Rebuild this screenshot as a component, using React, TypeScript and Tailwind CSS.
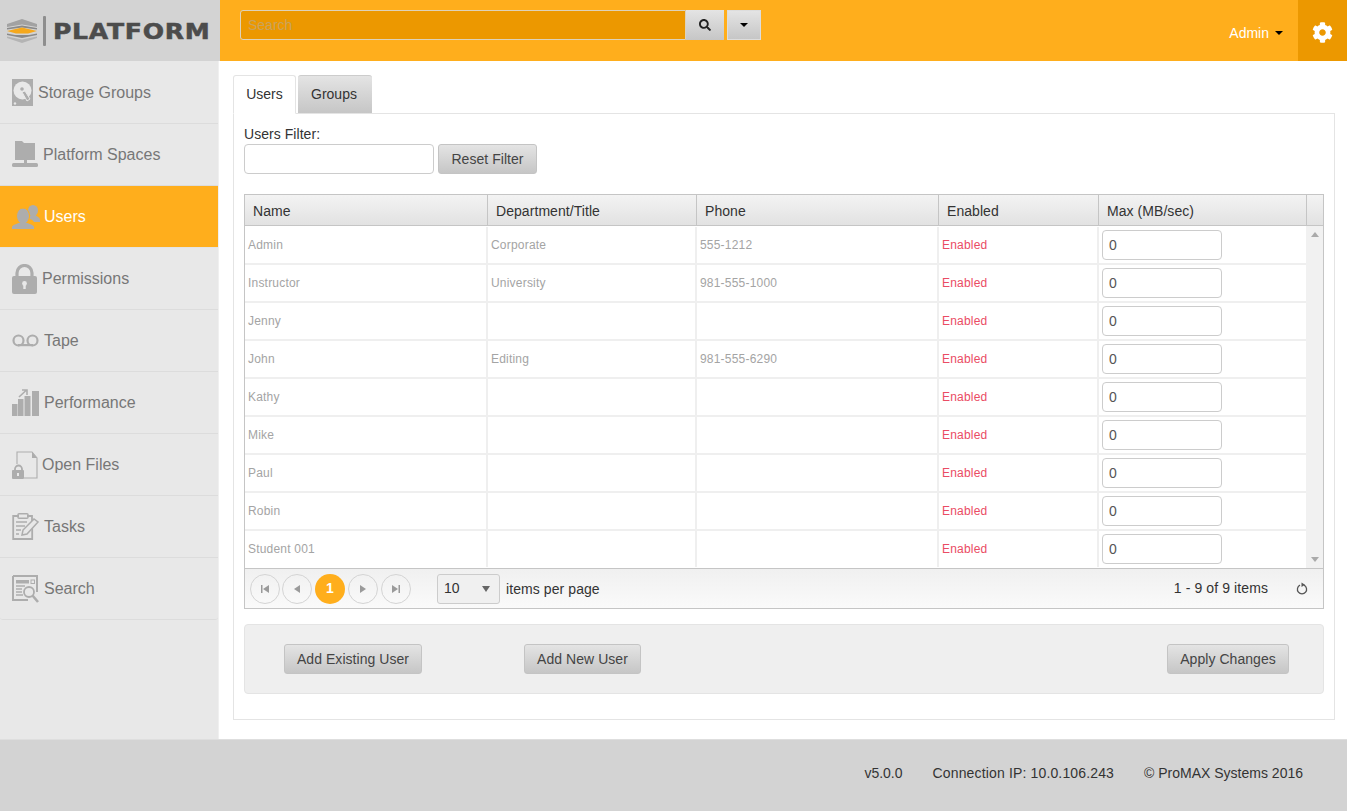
import React from "react";
import { FaCog, FaSearch } from "react-icons/fa";

const F = "#adadad";

const Disk = () => (
  <svg width="21" height="27" viewBox="0 0 21 27">
    <rect width="21" height="27" fill={F} />
    <circle cx="10.5" cy="11.5" r="9" fill="#e8e8e8" />
    <circle cx="10" cy="10" r="1.8" fill={F} />
    <path d="M10 13 L13 12 L18 20 L15 22 Z" fill={F} stroke="#e8e8e8" strokeWidth="1" />
    <circle cx="3" cy="24.500" r="1.200" fill="#e8e8e8" />
  </svg>
);
const Spaces = () => (
  <svg width="26" height="27" viewBox="0 0 26 27">
    <path d="M3 0h7l2 2h11v17H3z" fill={F} />
    <rect x="12" y="19" width="3" height="4" fill={F} />
    <rect x="0" y="22" width="26" height="4" rx="1.500" fill={F} />
  </svg>
);
const UsersIcon = () => (
  <svg width="28" height="24" viewBox="0 0 28 24">
    <ellipse cx="21" cy="5.500" rx="5" ry="5.500" fill={F} />
    <path d="M19 9h4c0 2 5 3 5 5.500V17h-6c-1-2-3-3-5-3z" fill={F} />
    <ellipse cx="11" cy="11" rx="6.500" ry="8" fill={F} stroke="#ffae1c" strokeWidth="1" />
    <path d="M0 24v-2c0-2 5-3 8-4.500h6c3 1.500 8 2.500 8 4.500v2z" fill={F} />
  </svg>
);
const Lock = () => (
  <svg width="25" height="30" viewBox="0 0 25 30">
    <path d="M5 13V9a7.500 7.500 0 0 1 15 0v4" fill="none" stroke={F} strokeWidth="3.200" />
    <rect y="12" width="25" height="18" rx="2" fill={F} />
    <circle cx="12.500" cy="19.500" r="2.400" fill="#e8e8e8" />
    <rect x="11.300" y="20" width="2.400" height="5" fill="#e8e8e8" />
  </svg>
);
const TapeIcon = () => (
  <svg width="27" height="13" viewBox="0 0 27 13">
    <circle cx="6.500" cy="6.500" r="5" fill="none" stroke={F} strokeWidth="2.200" />
    <circle cx="20.500" cy="6.500" r="5" fill="none" stroke={F} strokeWidth="2.200" />
    <rect x="6" y="10" width="15" height="2.200" fill={F} />
  </svg>
);
const Perf = () => (
  <svg width="27" height="27" viewBox="0 0 27 27">
    <rect y="15" width="5.500" height="12" fill={F} />
    <rect x="6" y="10" width="5.500" height="17" fill={F} />
    <rect x="12.500" y="7" width="6" height="20" fill={F} />
    <rect x="20" y="2" width="7" height="25" fill={F} />
    <path d="M7 8 L14 1.500 M10 1h5v5" fill="none" stroke={F} strokeWidth="1.600" />
  </svg>
);
const OpenFile = () => (
  <svg width="26" height="28" viewBox="0 0 26 28">
    <path d="M5 13V1h15l5 6v20H12" fill="none" stroke={F} strokeWidth="1.100" />
    <path d="M20 1v6h5z" fill={F} />
    <path d="M3 20v-2a3.500 3.500 0 0 1 7 0v2" fill="none" stroke={F} strokeWidth="1.800" />
    <rect y="19" width="12" height="9" rx="1" fill={F} />
    <rect x="5" y="22" width="2" height="3" fill="#e8e8e8" />
  </svg>
);
const TasksIcon = () => (
  <svg width="27" height="27" viewBox="0 0 27 27">
    <path d="M7 3H1.200v23h19V15" fill="none" stroke={F} strokeWidth="1.800" />
    <path d="M20 8V3h-5" fill="none" stroke={F} strokeWidth="1.800" />
    <rect x="6" y="0.800" width="10" height="4.500" rx="1" fill="none" stroke={F} strokeWidth="1.500" />
    <path d="M4 9h11M4 13h9M4 17h5M4 21h3" stroke={F} strokeWidth="1.500" />
    <path d="M10 22 L11 17 L22 6 L26 9 L15 21 Z" fill="#e8e8e8" stroke={F} strokeWidth="1.500" />
  </svg>
);
const SearchIcon = () => (
  <svg width="27" height="28" viewBox="0 0 27 28">
    <path d="M1 1h24v16M16 25H1V1" fill="none" stroke={F} strokeWidth="2" />
    <rect x="4" y="5" width="13" height="3.500" fill={F} />
    <rect x="19" y="5" width="3.500" height="3.500" fill="none" stroke={F} />
    <path d="M4 11h9M4 14h6M4 17h6M4 20h7" stroke={F} strokeWidth="1.300" />
    <circle cx="17" cy="17" r="5" fill="#e8e8e8" stroke={F} strokeWidth="1.800" />
    <path d="M20.500 20.500L26 27" stroke={F} strokeWidth="2.600" />
  </svg>
);

const nav: [string, React.ReactNode, string][] = [
  ["Storage Groups", <Disk />, "gap-[5px]"],
  ["Platform Spaces", <Spaces />, "gap-[5px]"],
  ["Users", <UsersIcon />, "gap-[4px]"],
  ["Permissions", <Lock />, "gap-[5px]"],
  ["Tape", <TapeIcon />, "gap-[5px]"],
  ["Performance", <Perf />, "gap-[5px]"],
  ["Open Files", <OpenFile />, "gap-[4px]"],
  ["Tasks", <TasksIcon />, "gap-[5px]"],
  ["Search", <SearchIcon />, "gap-[5px]"],
];

const rows = [
  ["Admin", "Corporate", "555-1212"],
  ["Instructor", "University", "981-555-1000"],
  ["Jenny", "", ""],
  ["John", "Editing", "981-555-6290"],
  ["Kathy", "", ""],
  ["Mike", "", ""],
  ["Paul", "", ""],
  ["Robin", "", ""],
  ["Student 001", "", ""],
];

const Caret = () => (
  <span className="inline-block w-0 h-0 border-x-[4px] border-x-transparent border-t-[4px] border-t-black" />
);

const Btn = ({ children, w }: { children: React.ReactNode; w: string }) => (
  <button className={`${w} h-[30px] rounded-[3px] border border-[#c4c4c4] bg-linear-to-b from-[#e4e4e4] to-[#c6c6c6] text-[14px] tracking-[0.05px] text-[#444] flex items-center justify-center`}>
    {children}
  </button>
);

const Pager = ({ children, tight }: { children: React.ReactNode; tight?: boolean }) => (
  <span className={`w-[30px] h-[30px] rounded-full border border-[#d4d4d4] flex items-center justify-center ${tight ? "-mr-px" : ""}`}>{children}</span>
);

const tri = "#9a9a9a";

export default function App() {
  return (
    <div className="w-full h-[811px] flex flex-col bg-white overflow-hidden font-['Liberation_Sans',Arial,sans-serif] text-[14px] text-[#333]">
      <header className="h-[61px] flex shrink-0 bg-[#ffae1c]">
        <div className="w-[220px] bg-[#d3d3d3] flex items-center pl-[7px]">
          <svg width="30" height="24" viewBox="0 0 30 24">
            <path d="M15 0L30 5v3L15 5.500 0 8V5z" fill="#a2a2a2" />
            <path d="M0 9L15 6.500 30 9v1.500L15 8.500 0 10.500z" fill="#8a8a8a" />
            <path d="M0 12L15 8.500 30 12 21 14.500H9z" fill="#f5a81c" />
            <path d="M0 14.500l8 1.500h14l8-1.500v1.500l-15 3-15-3z" fill="#8a8a8a" />
            <path d="M0 17.500l15 3 15-3V19l-15 5-15-5z" fill="#b4b4b4" />
          </svg>
          <span className="ml-[6px] w-[3px] h-[30px] bg-[#8e8e8e] rounded-[1px]" />
          <span className="ml-[7px] pt-[3px] font-['DejaVu_Sans',sans-serif] font-bold text-[21px] leading-none text-[#4c4c4c] [-webkit-text-stroke:0.5px_#4c4c4c] tracking-[0.6px] origin-left scale-x-[1.195] whitespace-nowrap">PLATFORM</span>
        </div>
        <div className="flex-1 flex items-start pt-[10px] pl-[20px]">
          <div className="w-[446px] h-[30px] bg-[#ec9800] border border-[#ddd2ba] rounded-l-[3px] text-[14px] text-[#c9a35d] pl-[7px] flex items-center">Search</div>
          <span className="w-[38px] h-[30px] bg-linear-to-b from-[#e4e4e4] to-[#c6c6c6] flex items-center justify-center text-[#222]"><FaSearch size={12} /></span>
          <span className="ml-[3px] w-[34px] h-[30px] border border-[#ddd] bg-linear-to-b from-[#e4e4e4] to-[#c6c6c6] flex items-center justify-center"><Caret /></span>
        </div>
        <div className="flex items-center text-white gap-[6px] pr-[15px] pt-[5px]">
          Admin <Caret />
        </div>
        <div className="w-[49px] bg-[#ec9800] flex items-center justify-center text-white pt-[3px]"><FaCog size={21} /></div>
      </header>

      <div className="flex h-[678px] shrink-0">
        <aside className="w-[219px] shrink-0 bg-[#e8e8e8] border-r border-[#f0f0f0] pt-px">
          <nav className="border-b border-[#dcdcdc] rounded-b-[3px]">
            {nav.map(([t, ic, g], i) => {
              const active = t === "Users";
              return (
                <div
                  key={t}
                  className={`pl-[12px] flex items-center text-[16px] ${g} ${i < 8 ? "h-[62px] border-b" : "h-[61px]"} ${active ? "bg-[#ffae1c] text-white border-[#e4e4e4]" : "text-[#777] border-[#dcdcdc]"}`}
                >
                  <span className="shrink-0 flex items-center">{ic}</span>
                  <span>{t}</span>
                </div>
              );
            })}
          </nav>
        </aside>

        <main className="flex-1 pt-[14px] pl-[14px] pr-[12px]">
          <div className="flex h-[39px] gap-[2px] items-start relative z-10">
            <div className="w-[63px] h-[39px] bg-white border border-[#e4e4e4] border-b-white rounded-t-[3px] flex items-center justify-center">Users</div>
            <div className="w-[74px] h-[38px] bg-linear-to-b from-[#e4e4e4] to-[#c6c6c6] border-t border-[#ccc] rounded-t-[3px] flex items-center justify-center pr-[2px]">Groups</div>
          </div>
          <section className="h-[607px] -mt-px border border-[#e4e4e4] px-[10px] pt-[12px]">
            <div className="leading-[16px] mb-[2px] tracking-[0.05px]">Users Filter:</div>
            <div className="flex gap-[4px]">
              <div className="w-[190px] h-[30px] bg-white border border-[#ccc] rounded-[4px]" />
              <Btn w="w-[99px]">Reset Filter</Btn>
            </div>

            <div className="mt-[20px] border border-[#c5c5c5]">
              <div className="grid grid-cols-[243px_209px_242px_160px_208px_1fr] h-[31px] border-b border-[#c5c5c5] bg-linear-to-b from-[#f3f3f3] to-[#e2e2e2]">
                {["Name", "Department/Title", "Phone", "Enabled", "Max (MB/sec)", ""].map((h, i) => (
                  <div key={i} className={`flex items-center pl-[8px] pt-[2px] tracking-[0.06px] ${i < 5 ? "border-r border-[#c5c5c5]" : ""} ${i === 0 ? "-ml-px pl-[9px]" : ""}`}>{h}</div>
                ))}
              </div>
              <div className="flex h-[342px]">
                <div className="w-[1061px] pt-px">
                  {rows.map((r) => (
                    <div key={r[0]} className="grid grid-cols-[243px_209px_242px_160px_208px] h-[38px] border-b-2 border-[#efefef] last:border-b-0 last:h-[36px] text-[12px] tracking-[0.2px] text-[#a4a4a4]">
                      <div className="pl-[4px] -ml-px flex items-center border-r-2 border-[#efefef]">{r[0]}</div>
                      <div className="pl-[3px] flex items-center border-r-2 border-[#efefef]">{r[1]}</div>
                      <div className="pl-[3px] flex items-center border-r-2 border-[#efefef]">{r[2]}</div>
                      <div className="pl-[3px] flex items-center text-[#ea4c64] border-r-2 border-[#efefef]">Enabled</div>
                      <div className="pl-[3px] flex items-center">
                        <div className="w-[120px] h-[30px] border border-[#ccc] rounded-[4px] pl-[6px] flex items-center text-[14px] text-[#555]">0</div>
                      </div>
                    </div>
                  ))}
                </div>
                <div className="flex-1 bg-[#f1f1f1] flex flex-col items-center justify-between py-[6px]">
                  <svg width="8" height="5" viewBox="0 0 8 5"><path d="M4 0l4 5H0z" fill="#aaa" /></svg>
                  <svg width="8" height="5" viewBox="0 0 8 5"><path d="M0 0h8L4 5z" fill="#aaa" /></svg>
                </div>
              </div>
              <div className="h-[40px] border-t border-[#c5c5c5] bg-linear-to-b from-[#f0f0f0] to-[#fafafa] flex items-center pl-[5px] pr-[15px]">
                <div className="flex gap-[3px]">
                  <Pager tight><svg width="8" height="8" viewBox="0 0 8 8"><path d="M0 0h1.500v8H0zM8 0v8L2 4z" fill={tri} /></svg></Pager>
                  <Pager><svg width="6" height="8" viewBox="0 0 6 8"><path d="M6 0v8L0 4z" fill={tri} /></svg></Pager>
                  <span className="w-[30px] h-[30px] rounded-full bg-[#ffae1c] text-white font-bold flex items-center justify-center">1</span>
                  <Pager><svg width="6" height="8" viewBox="0 0 6 8"><path d="M0 0v8l6-4z" fill={tri} /></svg></Pager>
                  <Pager><svg width="8" height="8" viewBox="0 0 8 8"><path d="M6.500 0H8v8H6.500zM0 0v8l6-4z" fill={tri} /></svg></Pager>
                </div>
                <div className="ml-[26px] w-[63px] h-[30px] border border-[#ccc] rounded-[3px] bg-[#f0f0f0] pl-[6px] pr-[9px] flex items-center justify-between">
                  <span>10</span>
                  <svg width="8" height="6" viewBox="0 0 8 6"><path d="M0 0h8L4 6z" fill="#666" /></svg>
                </div>
                <span className="ml-[6px] pt-px tracking-[0.08px]">items per page</span>
                <span className="ml-auto tracking-[0.1px]">1 - 9 of 9 items</span>
                <svg className="ml-[28px]" width="12" height="13" viewBox="0 0 12 13">
                  <path d="M8 3.200a4.600 4.600 0 1 1-4 0" fill="none" stroke="#555" strokeWidth="1.300" />
                  <path d="M5.500 0.500v4.500l3.500-2.200z" fill="#555" />
                </svg>
              </div>
            </div>

            <div className="mt-[15px] h-[70px] bg-[#efefef] border border-[#e4e4e4] rounded-[4px] flex items-center pl-[39px] pr-[34px]">
              <Btn w="w-[138px]">Add Existing User</Btn>
              <span className="ml-[102px]"><Btn w="w-[117px]">Add New User</Btn></span>
              <span className="ml-auto"><Btn w="w-[122px]">Apply Changes</Btn></span>
            </div>
          </section>
        </main>
      </div>

      <footer className="flex-1 bg-[#d3d3d3] border-t border-[#dedede] flex items-center justify-end pr-[44px] gap-[30px] pb-[5px]">
        <span>v5.0.0</span>
        <span className="tracking-[0.15px]">Connection IP: 10.0.106.243</span>
        <span>© ProMAX Systems 2016</span>
      </footer>
    </div>
  );
}
